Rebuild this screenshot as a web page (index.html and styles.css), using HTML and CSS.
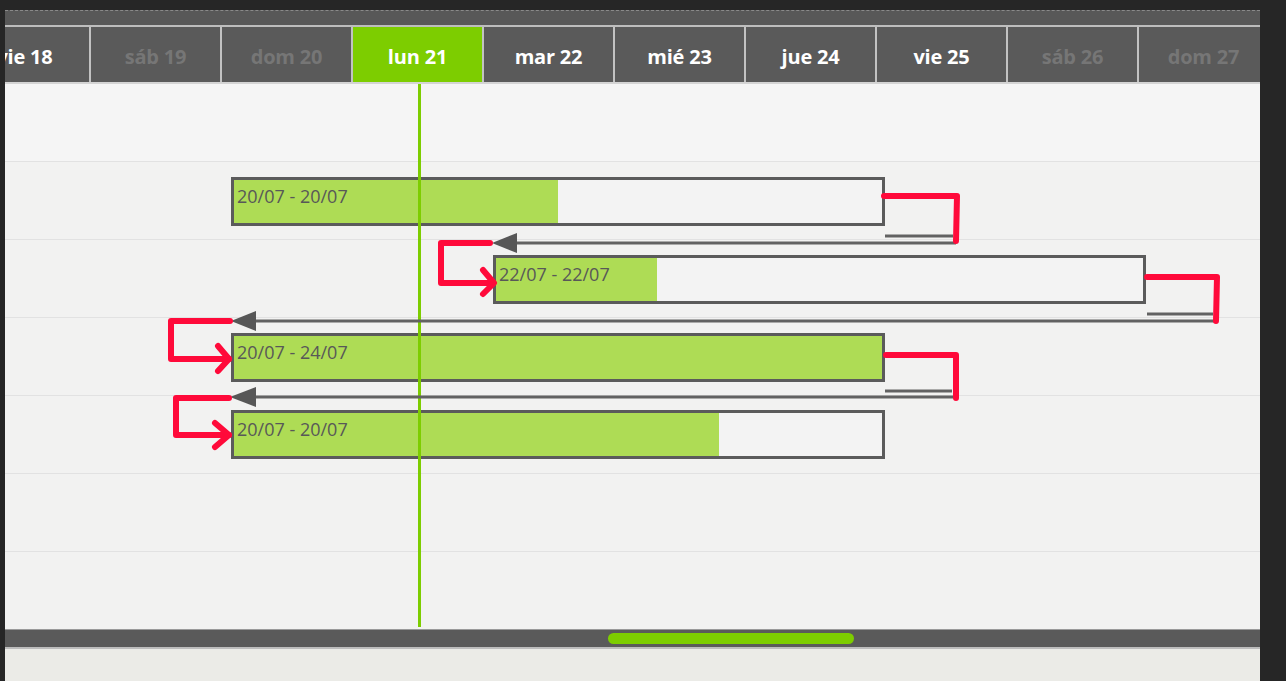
FILE: index.html
```html
<!DOCTYPE html>
<html lang="es">
<head>
<meta charset="utf-8">
<title>Gantt</title>
<link rel="stylesheet" href="styles.css">
</head>
<body>
<div class="app">
  <div class="topband"></div>
  <div class="header">
    <div class="days">
      <div class="day">vie 18</div>
      <div class="day weekend">sáb 19</div>
      <div class="day weekend">dom 20</div>
      <div class="day today">lun 21</div>
      <div class="day">mar 22</div>
      <div class="day">mié 23</div>
      <div class="day">jue 24</div>
      <div class="day">vie 25</div>
      <div class="day weekend">sáb 26</div>
      <div class="day weekend">dom 27</div>
    </div>
  </div>
  <div class="chart">
    <div class="rows">
      <div class="row first"></div>
      <div class="row"></div>
      <div class="row"></div>
      <div class="row"></div>
      <div class="row"></div>
      <div class="row"></div>
      <div class="row"></div>
    </div>
    <div class="bar" style="left:226px;top:93px;width:654px"><div class="bar-fill" style="width:324px"></div><span class="bar-label">20/07 - 20/07</span></div>
    <div class="bar" style="left:488px;top:171px;width:653px"><div class="bar-fill" style="width:161px"></div><span class="bar-label">22/07 - 22/07</span></div>
    <div class="bar" style="left:226px;top:249px;width:654px"><div class="bar-fill" style="width:100%"></div><span class="bar-label">20/07 - 24/07</span></div>
    <div class="bar" style="left:226px;top:326px;width:654px"><div class="bar-fill" style="width:485px"></div><span class="bar-label">20/07 - 20/07</span></div>
    <div class="today-line"></div>
    <svg class="links" width="1255" height="545" viewBox="5 84 1255 545">
      <g class="link">
        <path d="M885 236 H953"/>
        <path d="M956 243 H515"/>
        <polygon points="492,243 517,233 517,253"/>
        <path d="M1147 314 H1213"/>
        <path d="M1216 321 H254"/>
        <polygon points="231,321 256,311 256,331"/>
        <path d="M885 391 H952"/>
        <path d="M955 397 H254"/>
        <polygon points="230,397 256,387 256,407"/>
      </g>
      <g class="mark">
        <path d="M884 196 H957 L956 241"/>
        <path d="M490 243 H441 V283 H493"/>
        <path d="M483 270 L494 283 L483 294"/>
        <path d="M1147 277 H1217 L1216 321"/>
        <path d="M230 321 H171 V359 H229"/>
        <path d="M218 346 L229 359 L218 371"/>
        <path d="M886 355 H956 V398"/>
        <path d="M229 398 H176 V435 H229"/>
        <path d="M215 423 L229 435 L215 447"/>
      </g>
    </svg>
  </div>
  <div class="scrollbar"><div class="thumb"></div></div>
  <div class="footer"></div>
</div>
</body>
</html>
```
FILE: styles.css
```css
html, body {
  margin: 0;
  padding: 0;
  background: #262626;
}
body {
  width: 1286px;
  height: 681px;
  overflow: hidden;
  font-family: "Open Sans", "DejaVu Sans", sans-serif;
}
.app {
  margin: 10px 0 0 5px;
  width: 1255px;
  display: flex;
  flex-direction: column;
}
.topband {
  height: 14px;
  background: #585858;
  border-top: 1px dashed #8a8a8a;
  border-bottom: 2px solid #bdbdbd;
}
.header {
  height: 55px;
  overflow: hidden;
  background: #5a5a5a;
  border-bottom: 2px solid #d4d4d4;
}
.days {
  display: flex;
  margin-left: -45px;
  height: 100%;
}
.day {
  flex: 0 0 131px;
  border-right: 2px solid #c2c2c2;
  display: flex;
  align-items: center;
  justify-content: center;
  padding-top: 3px;
  box-sizing: border-box;
  font-size: 20px;
  font-weight: 700;
  color: #ffffff;
  letter-spacing: -0.2px;
}
.day.weekend {
  color: #767676;
}
.day.today {
  background: #7dcd00;
}
.chart {
  position: relative;
  height: 545px;
  overflow: hidden;
}
.rows {
  display: flex;
  flex-direction: column;
}
.row {
  flex: 0 0 77px;
  border-bottom: 1px solid #e2e2e2;
  background: #f2f2f1;
}
.row.first {
  background: #f5f5f5;
}
.bar {
  position: absolute;
  box-sizing: border-box;
  height: 49px;
  border: 3px solid #5b5b5b;
  background: #f3f3f3;
}
.bar-fill {
  position: absolute;
  left: 0;
  top: 0;
  bottom: 0;
  background: #aedc55;
}
.bar-label {
  position: relative;
  display: block;
  padding: 4px 0 0 3px;
  font-size: 18px;
  line-height: 24px;
  color: #585858;
}
.today-line {
  position: absolute;
  left: 413px;
  top: 0;
  width: 3px;
  height: 543px;
  background: #7dcd00;
}
.links {
  position: absolute;
  left: 0;
  top: 0;
}
.link path {
  fill: none;
  stroke: #626262;
  stroke-width: 3;
}
.link polygon {
  fill: #575757;
}
.mark path {
  fill: none;
  stroke: #ff0a3a;
  stroke-width: 6;
  stroke-linecap: round;
  stroke-linejoin: round;
}
.scrollbar {
  height: 20px;
  box-sizing: border-box;
  padding-top: 3px;
  background: #5a5a5a;
  border-top: 1px solid #9a9a9a;
  border-bottom: 2px solid #bdbdbd;
}
.thumb {
  margin-left: 603px;
  width: 246px;
  height: 11px;
  border-radius: 6px;
  background: #7dcd00;
}
.footer {
  height: 32px;
  background: #ebebe7;
}
```
